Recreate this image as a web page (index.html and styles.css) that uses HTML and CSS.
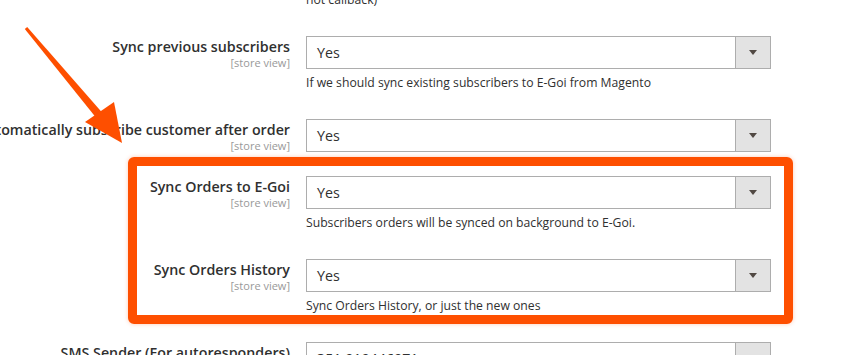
FILE: index.html
```html
<!DOCTYPE html>
<html lang="en">
<head>
    <meta charset="UTF-8">
    <meta name="viewport" content="width=device-width, initial-scale=1.0">
    <title>E-Goi Sync Settings</title>
    <link rel="stylesheet" href="styles.css">
</head>
<body>
    <div class="config">
        <div class="row">
            <div class="label"></div>
            <div class="value">
                <p class="hint prev-hint">not callback)</p>
            </div>
        </div>

        <div class="row">
            <div class="label">
                <span class="title">Sync previous subscribers</span>
                <span class="scope">[store view]</span>
            </div>
            <div class="value">
                <div class="select"><span>Yes</span><i class="toggle"></i></div>
                <p class="hint">If we should sync existing subscribers to E-Goi from Magento</p>
            </div>
        </div>

        <div class="row">
            <div class="label">
                <span class="title">Automatically subscribe customer after order</span>
                <span class="scope">[store view]</span>
            </div>
            <div class="value">
                <div class="select"><span>Yes</span><i class="toggle"></i></div>
            </div>
        </div>

        <div class="row">
            <div class="label">
                <span class="title">Sync Orders to E-Goi</span>
                <span class="scope">[store view]</span>
            </div>
            <div class="value">
                <div class="select"><span>Yes</span><i class="toggle"></i></div>
                <p class="hint">Subscribers orders will be synced on background to E-Goi.</p>
            </div>
        </div>

        <div class="row">
            <div class="label">
                <span class="title">Sync Orders History</span>
                <span class="scope">[store view]</span>
            </div>
            <div class="value">
                <div class="select"><span>Yes</span><i class="toggle"></i></div>
                <p class="hint">Sync Orders History, or just the new ones</p>
            </div>
        </div>

        <div class="row">
            <div class="label">
                <span class="title">SMS Sender (For autoresponders)</span>
                <span class="scope">[store view]</span>
            </div>
            <div class="value">
                <div class="select"><span>351 919446971</span><i class="toggle"></i></div>
            </div>
        </div>
    </div>

    <!-- Annotation: highlight box and arrow drawn over the form -->
    <div class="highlight"></div>
    <svg class="arrow" width="130" height="150" viewBox="0 0 130 150">
        <polygon fill="#fe4f00" points="27.2,27 24.8,29 95.9,117.6 102.1,112.4"/>
        <polygon fill="#fe4f00" points="85,122 114,102 122,143"/>
    </svg>
</body>
</html>
```

FILE: styles.css
```css
* {
    margin: 0;
    padding: 0;
    box-sizing: border-box;
}

body {
    font-family: "Open Sans", Arial, sans-serif;
    background: #fff;
    color: #303030;
    width: 846px;
    height: 355px;
    position: relative;
    overflow: hidden;
}

.config {
    display: flex;
    flex-direction: column;
    gap: 24px;
    margin-top: -9px;
}

.row {
    display: grid;
    grid-template-columns: 290px 465px;
    column-gap: 16px;
}

.label {
    display: flex;
    flex-direction: column;
    align-items: flex-end;
    white-space: nowrap;
}

.title {
    font-size: 14.25px;
    font-weight: 600;
    line-height: 19px;
    padding-top: 1px;
}

.scope {
    font-size: 11px;
    line-height: 13px;
    color: #999;
}

.select {
    height: 33px;
    border: 1px solid #adadad;
    background: #fff;
    display: flex;
    align-items: center;
    font-size: 14.25px;
    padding-left: 10px;
}

.select span {
    flex: 1;
}

.toggle {
    width: 35px;
    height: 31px;
    background: #e3e3e3;
    border-left: 1px solid #adadad;
    display: flex;
    align-items: center;
    justify-content: center;
}

.toggle::before {
    content: '';
    border-left: 4px solid transparent;
    border-right: 4px solid transparent;
    border-top: 5px solid #514943;
}

.hint {
    font-size: 12.2px;
    line-height: 18px;
    margin: 5px 0 3px;
}

.prev-hint {
    margin-top: 0;
}

/* Annotation overlay */
.highlight {
    position: absolute;
    left: 128px;
    top: 157px;
    width: 665px;
    height: 167px;
    border: 9px solid #fe4f00;
    border-radius: 6px;
    box-shadow: 0 0 4px rgba(254, 79, 0, 0.3);
}

.arrow {
    position: absolute;
    left: 0;
    top: 0;
}
```
